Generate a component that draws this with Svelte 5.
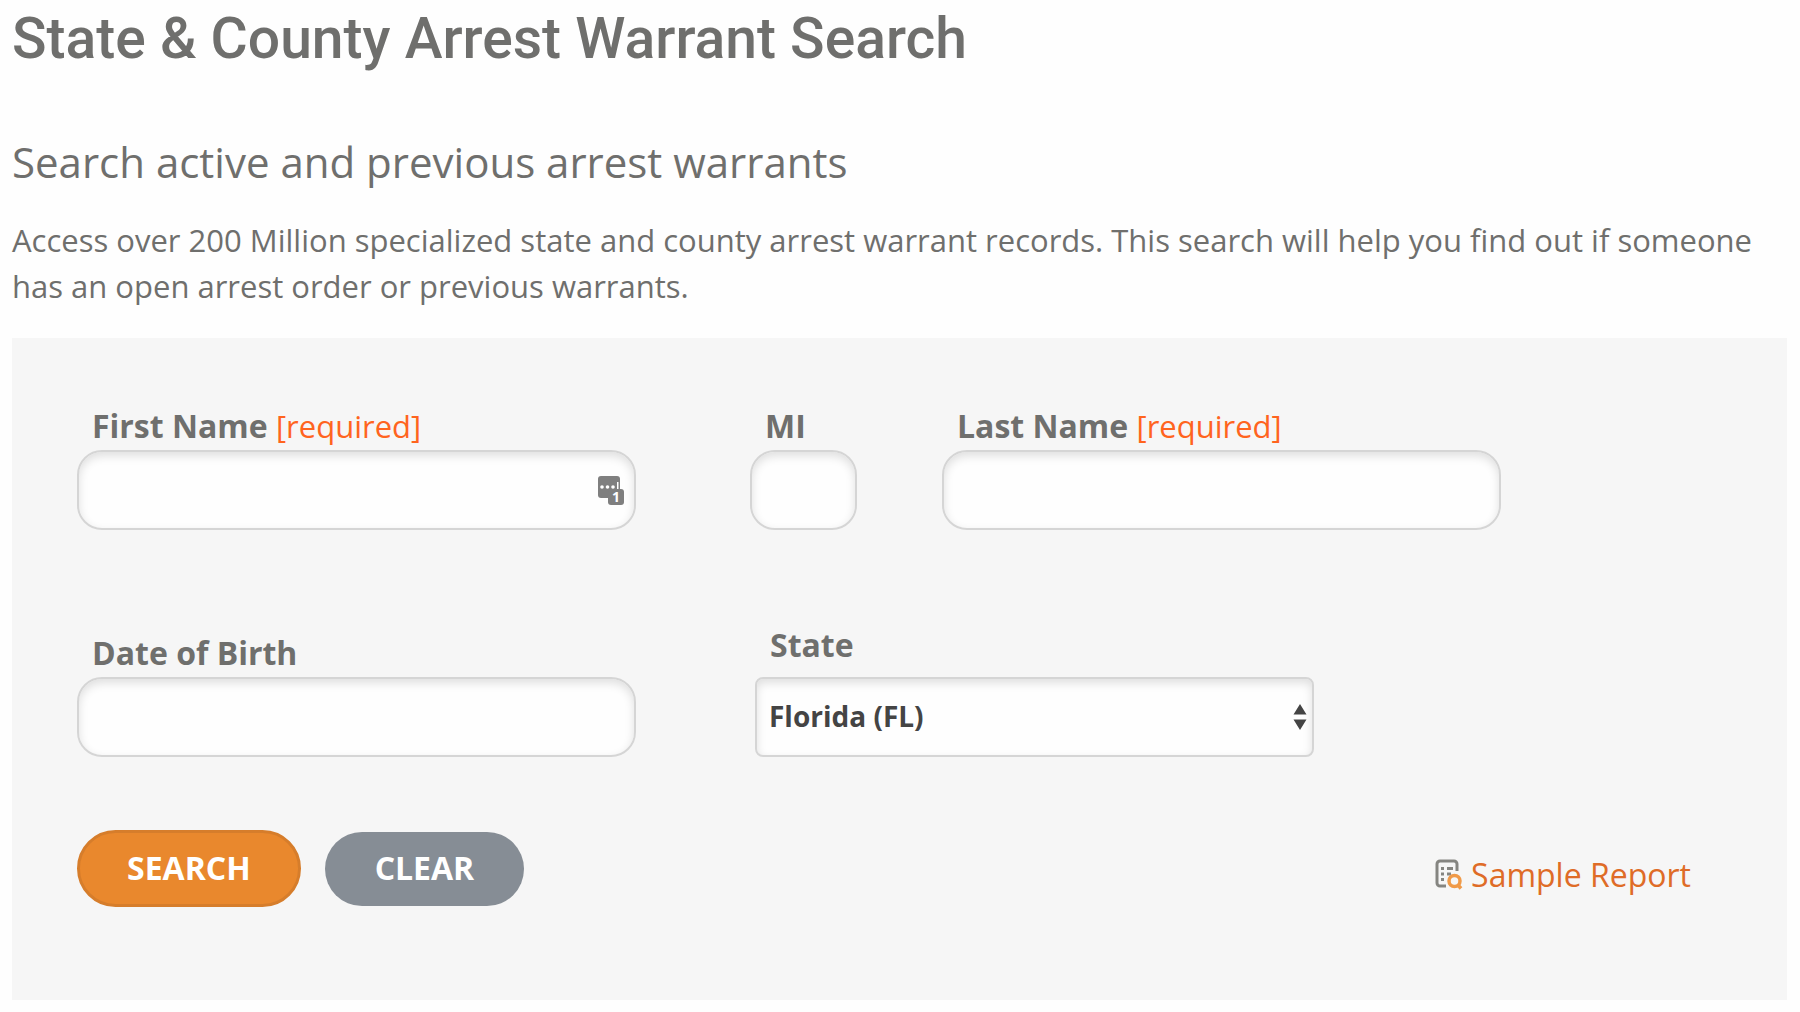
<script lang="ts">
	let firstName = $state('');
	let middleInitial = $state('');
	let lastName = $state('');
	let birthDate = $state('');
	let region = $state('FL');

	const regions = [
		{ code: 'AL', name: 'Alabama' },
		{ code: 'CA', name: 'California' },
		{ code: 'FL', name: 'Florida' },
		{ code: 'GA', name: 'Georgia' },
		{ code: 'NY', name: 'New York' },
		{ code: 'TX', name: 'Texas' }
	];

	function handleSubmit(e: SubmitEvent) {
		e.preventDefault();
	}

	function handleClear() {
		firstName = '';
		middleInitial = '';
		lastName = '';
		birthDate = '';
	}
</script>

<main class="page">
	<h1>State &amp; County Arrest Warrant Search</h1>
	<h2>Search active and previous arrest warrants</h2>
	<p class="intro">
		Access over 200 Million specialized state and county arrest warrant records. This search will
		help you find out if someone has an open arrest order or previous warrants.
	</p>

	<form class="panel" onsubmit={handleSubmit}>
		<div class="row">
			<div class="field">
				<label for="first-name">First Name <span class="required">[required]</span></label>
				<div class="control">
					<input id="first-name" type="text" bind:value={firstName} />
					<svg class="autofill" viewBox="0 0 26 30" width="26" height="30" aria-hidden="true">
						<rect x="0" y="1" width="22" height="22" rx="3" fill="#7f7f7f" />
						<circle cx="4" cy="12" r="1.8" fill="#fff" />
						<circle cx="9.5" cy="12" r="1.8" fill="#fff" />
						<circle cx="15" cy="12" r="1.8" fill="#fff" />
						<rect x="19" y="7" width="1.5" height="8" fill="#fff" />
						<rect x="10" y="14" width="16" height="16" rx="3" fill="#7f7f7f" />
						<text x="18" y="27" text-anchor="middle">1</text>
					</svg>
				</div>
			</div>
			<div class="group">
				<div class="field initial">
					<label for="mi">MI</label>
					<input id="mi" type="text" maxlength="1" bind:value={middleInitial} />
				</div>
				<div class="field">
					<label for="last-name">Last Name <span class="required">[required]</span></label>
					<input id="last-name" type="text" bind:value={lastName} />
				</div>
			</div>
		</div>

		<div class="row second">
			<div class="field">
				<label for="dob">Date of Birth</label>
				<input id="dob" type="text" bind:value={birthDate} />
			</div>
			<div class="group region">
				<div class="field">
					<label for="state">State</label>
					<div class="control">
						<select id="state" bind:value={region}>
							{#each regions as { code, name }}
								<option value={code}>{name} ({code})</option>
							{/each}
						</select>
						<svg class="arrows" viewBox="0 0 14 26" width="14" height="26" aria-hidden="true">
							<path d="M7 0l6.5 10.5h-13zM7 26L.5 15.5h13z" fill="#444" />
						</svg>
					</div>
				</div>
			</div>
		</div>

		<div class="actions">
			<button type="submit" class="search">SEARCH</button>
			<button type="button" class="clear" onclick={handleClear}>CLEAR</button>
			<a class="sample" href="#sample-report">
				<svg viewBox="0 0 28 31" width="28" height="31" fill="none" aria-hidden="true">
					<path
						d="M22 12V5a3 3 0 0 0-3-3H5a3 3 0 0 0-3 3v19a3 3 0 0 0 3 3h6"
						stroke="#858581"
						stroke-width="3"
					/>
					<path
						d="M6 9.5h3M12 9.5h6M6 15h3M12 15h4M6 20.5h3"
						stroke="#858581"
						stroke-width="3"
					/>
					<circle cx="19.5" cy="22" r="5.5" stroke="#f09a48" stroke-width="3.5" />
					<path d="M23 26l3 3.5" stroke="#f09a48" stroke-width="3.5" />
				</svg>
				Sample Report
			</a>
		</div>
	</form>
</main>

<style>
	:global(body) {
		margin: 0;
		background: #fefefe;
	}

	.page {
		padding: 8px 13px 12px 12px;
		color: #6f6f6d;
		font-family: 'Open Sans', sans-serif;
		font-size: 32px;
	}

	h1 {
		margin: 0;
		font-family: Roboto, sans-serif;
		font-size: 57px;
		font-weight: 500;
		line-height: 62px;
	}

	h2 {
		margin: 64px 0 0;
		font-size: 42px;
		font-weight: 400;
		line-height: 56px;
	}

	.intro {
		margin: 27px 0 0;
		font-size: 31px;
		line-height: 46px;
	}

	.panel {
		margin-top: 29px;
		padding: 64px 96px 93px 65px;
		background: #f6f6f6;
	}

	.row {
		display: flex;
		align-items: flex-end;
		gap: 114px;
	}

	.second {
		margin-top: 91px;
	}

	.group {
		display: flex;
		gap: 85px;
	}

	.field {
		width: 559px;
		min-width: 0;
	}

	.initial {
		width: 107px;
	}

	label {
		display: block;
		padding-left: 15px;
		font-weight: 700;
		line-height: 48px;
	}

	.required {
		color: #ff641e;
		font-size: 31px;
		font-weight: 400;
	}

	.control {
		position: relative;
	}

	input,
	select {
		display: block;
		box-sizing: border-box;
		width: 100%;
		height: 80px;
		border: 2px solid #d5d5d5;
		background: #fefefe;
		box-shadow: inset 0 4px 10px #00000020;
		color: #444;
		font-family: inherit;
		font-size: 28px;
	}

	input {
		padding: 0 16px;
		border-radius: 25px;
	}

	.autofill {
		position: absolute;
		top: 25px;
		right: 12px;
		overflow: visible;
	}

	.autofill text {
		fill: #fff;
		font-family: 'Open Sans', sans-serif;
		font-size: 14px;
		font-weight: 700;
	}

	.region {
		padding-left: 5px;
	}

	.region label {
		margin-bottom: 8px;
	}

	select {
		appearance: none;
		padding: 0 12px 2px;
		border-radius: 8px;
		font-weight: 700;
	}

	.arrows {
		position: absolute;
		top: 27px;
		right: 7px;
		pointer-events: none;
	}

	.actions {
		display: flex;
		align-items: center;
		gap: 24px;
		margin-top: 73px;
	}

	button {
		border: 0;
		border-radius: 40px;
		color: #fff;
		font-family: inherit;
		font-size: 32px;
		font-weight: 700;
		cursor: pointer;
	}

	.search {
		height: 77px;
		padding: 0 47px 2px;
		border: 3px solid #d67d2b;
		background: #e9882d;
	}

	.clear {
		height: 74px;
		padding: 0 50px 2px;
		background: #868d95;
	}

	.sample {
		display: flex;
		align-items: center;
		gap: 8px;
		margin-top: 12px;
		margin-left: auto;
		color: #df6c27;
		text-decoration: none;
	}
</style>
